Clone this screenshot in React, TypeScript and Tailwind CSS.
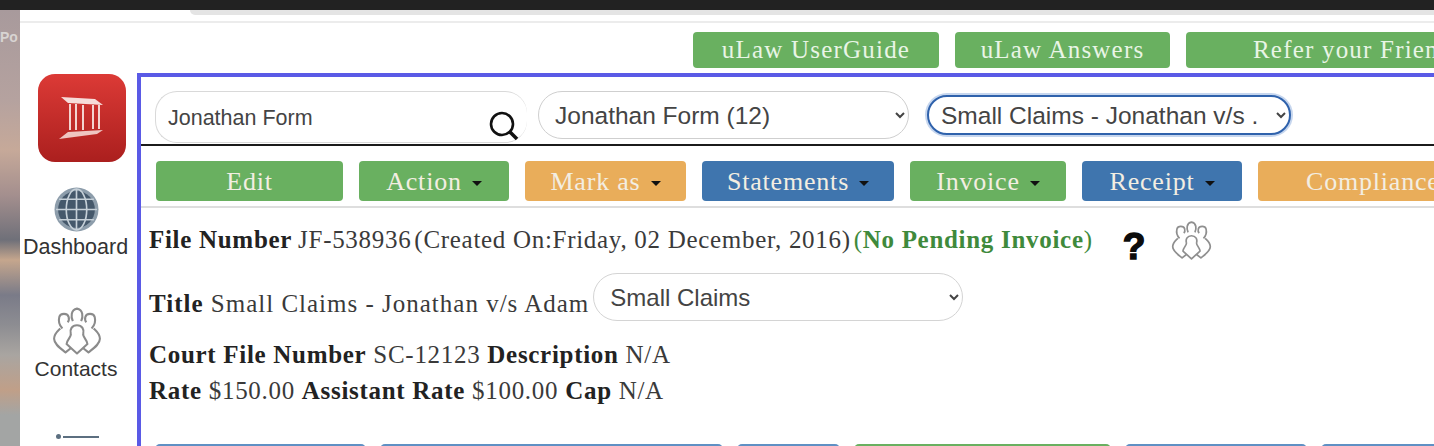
const serif = "font-['Liberation_Serif',serif]";
const sans = "font-['Liberation_Sans',sans-serif]";

const green = "bg-[#69b060]";
const orange = "bg-[#e9ad5a]";
const blue = "bg-[#3f75ae]";

const topLinks = [
  { label: "uLaw UserGuide", className: "w-[246px] justify-center" },
  { label: "uLaw Answers", className: "w-[215px] justify-center" },
  { label: "Refer your Friend", className: "w-[300px] pl-[67px]" },
];

const actions = [
  { label: "Edit", color: green, width: "w-[187px]" },
  { label: "Action", color: green, width: "w-[150px]", caret: true },
  { label: "Mark as", color: orange, width: "w-[161px]", caret: true },
  { label: "Statements", color: blue, width: "w-[192px]", caret: true },
  { label: "Invoice", color: green, width: "w-[156px]", caret: true },
  { label: "Receipt", color: blue, width: "w-[160px]", caret: true },
  { label: "Compliance", color: orange, width: "w-[230px]", indent: true },
];

const lowerButtons = [
  { color: "bg-[#5f90c4]", width: "w-[211px]" },
  { color: "bg-[#5f90c4]", width: "w-[343px]" },
  { color: "bg-[#5f90c4]", width: "w-[103px]" },
  { color: "bg-[#69b060]", width: "w-[257px]" },
  { color: "bg-[#5f90c4]", width: "w-[182px]" },
  { color: "bg-[#5f90c4]", width: "w-[200px]" },
];

const PeopleIcon = ({ className }: { className: string }) => (
  <svg viewBox="0 0 48 46" fill="none" stroke="currentColor" strokeWidth="2" strokeLinejoin="round" className={className}>
    <path d="M10 21 C7 18 6 14 7 10 C8 6 15 6 16 10 C16.5 12 16 14 15 15" />
    <path d="M38 21 C41 18 42 14 41 10 C40 6 33 6 32 10 C31.5 12 32 14 33 15" />
    <path d="M20 14 C18 10 18 3 24 2 C30 3 30 10 28 14" />
    <path d="M8 21 C5 24 2 26 2 31 C2 36 8 40 13 44 L18 40" />
    <path d="M40 21 C43 24 46 26 46 31 C46 36 40 40 35 44 L30 40" />
    <path d="M24 18 C19 18 17 22 18 26 C19 29 14 32 14 36 L24 45 L34 36 C34 32 29 29 30 26 C31 22 29 18 24 18 Z" />
  </svg>
);

const GlobeIcon = () => (
  <svg viewBox="0 0 44 44" className="w-[45px] h-[45px]">
    <circle cx="22" cy="22" r="21.5" fill="#8d9dab" />
    <circle cx="22" cy="22" r="18" fill="#45586b" />
    <g fill="none" stroke="#c6d0d8" strokeWidth="1.6">
      <ellipse cx="22" cy="22" rx="10" ry="20" />
      <path d="M22 2 V42 M2 22 H42 M5 12 H39 M5 32 H39" />
    </g>
  </svg>
);

const CourtLogo = () => (
  <div className="w-[88px] h-[88px] rounded-[17px] bg-gradient-to-b from-[#dc3a36] to-[#ab1f1e] flex items-center justify-center">
    <svg viewBox="0 0 46 44" fill="none" stroke="#f6dcd9" className="w-[46px] h-[44px]">
      <path d="M2 1 L36 3 L44 9 L9 7 Z" fill="#f6dcd9" stroke="none" />
      <path d="M11 8 V34 M17 8 V34 M24 9 V34 M34 9 V33 M40 9 V33" strokeWidth="1.9" />
      <path d="M9 36 L44 34 L38 38 L0 43 Z" fill="#efc5c1" stroke="none" />
    </svg>
  </div>
);

const Caret = () => (
  <span className="ml-[10px] mt-[5px] w-0 h-0 border-x-[5px] border-x-transparent border-t-[5px] border-t-[#111]" />
);

const SearchIcon = () => (
  <svg viewBox="0 0 32 32" fill="none" stroke="#111" className="absolute left-[347px] top-[33px] w-[32px] h-[32px]">
    <circle cx="14" cy="14" r="11" strokeWidth="2.6" />
    <path d="M21.5 21.5 L29 29" strokeWidth="3.6" />
  </svg>
);

export default function App() {
  return (
    <div className="w-[1434px] h-[446px] overflow-hidden bg-white flex flex-col">
      <div className="h-[10px] shrink-0 bg-[#222222]" />
      <div className="flex flex-1 min-h-0">
        <div className="w-[20px] shrink-0 bg-[linear-gradient(180deg,#a89a9c_0px,#b5a29f_90px,#c6a999_140px,#a48f8e_185px,#6f7079_230px,#c5a68d_250px,#7a7b88_285px,#8d8d92_315px,#a9a5a1_345px,#c09f88_380px,#a3a5a4_405px,#a3a5a4_436px)] overflow-hidden">
          <div className={`${sans} mt-[17px] text-[14px] font-bold text-[#d8d4d2] whitespace-nowrap`}>Po</div>
        </div>
        <div className="flex-1 min-w-0 flex flex-col relative">
          <div className="absolute left-[170px] right-0 top-0 h-[5px] bg-[#e4e4e4] rounded-bl-[14px]" />
          <div className="mt-[11px] h-[2px] bg-[#ececec] shrink-0" />
          <div className={`${serif} flex gap-[16px] pl-[673px] mt-[9px] h-[36px] shrink-0`}>
            {topLinks.map((link) => (
              <div
                key={link.label}
                className={`${link.className} ${green} shrink-0 rounded-[4px] text-[#e9f5e6] text-[25px] tracking-[1.2px] flex items-center whitespace-nowrap overflow-hidden`}
              >
                {link.label}
              </div>
            ))}
          </div>
          <div className="flex flex-1 min-h-0 mt-[5px]">
            <aside className={`${sans} w-[117px] shrink-0 flex flex-col items-center text-[#333]`}>
              <div className="mt-[1px] ml-[6px]"><CourtLogo /></div>
              <div className="mt-[25px] -ml-[4px] flex flex-col items-center">
                <GlobeIcon />
                <span className="mt-[3px] leading-[24px] text-[21.5px] -ml-[2px]">Dashboard</span>
              </div>
              <div className="mt-[47px] -ml-[3px] flex flex-col items-center">
                <span className="text-[#8b8b8b]"><PeopleIcon className="w-[50px] h-[49px]" /></span>
                <span className="mt-[2px] leading-[24px] text-[21px] -ml-[2px]">Contacts</span>
              </div>
              <div className="mt-[53px] -ml-[3px] flex items-center gap-[2px]">
                <span className="w-[5px] h-[5px] rounded-full bg-[#5c6f80]" />
                <span className="w-[36px] h-[2px] bg-[#5c6f80]" />
              </div>
            </aside>
            <main className="flex-1 min-w-0 border-l-[4px] border-t-[4px] border-[#5a5ae6]">
              <div className={`${sans} relative h-[69px] border-b-[2px] border-[#1b1b1b] flex items-start text-[#444]`}>
                <input
                  readOnly
                  value="Jonathan Form"
                  className="ml-[14px] mt-[14px] w-[372px] h-[52px] shrink-0 pl-[12px] pt-[3px] rounded-[22px] border-t-[1px] border-l-[1px] border-[#d9d9d9] border-b-[1px] text-[21.5px] text-[#444] outline-none"
                />
                <select className="ml-[11px] mt-[14px] w-[371px] h-[48px] shrink-0 pl-[12px] pr-[8px] rounded-[24px] border border-[#cfcfcf] text-[24.5px] bg-white text-[#444]">
                  <option>Jonathan Form (12)</option>
                </select>
                <select className="ml-[18px] mt-[18px] w-[364px] h-[40px] shrink-0 pl-[8px] pr-[4px] rounded-[20px] border-[2.5px] border-[#2f62ac] shadow-[0_0_0_2px_#c6d6ee] text-[24.5px] bg-white text-[#444]">
                  <option>Small Claims - Jonathan v/s .</option>
                </select>
                <SearchIcon />
              </div>
              <div className={`${serif} flex gap-[16px] pl-[15px] pt-[15px] h-[62px] border-b-[2px] border-[#dedede] text-[26px] tracking-[0.8px] text-[#f3eee2]`}>
                {actions.map((action) => (
                  <div
                    key={action.label}
                    className={`${action.color} ${action.width} shrink-0 h-[40px] rounded-[4px] flex items-center ${action.indent ? "pl-[48px]" : "justify-center"} whitespace-nowrap overflow-hidden`}
                  >
                    {action.label}
                    {action.caret && <Caret />}
                  </div>
                ))}
              </div>
              <div className={`${serif} pl-[8px] text-[25px] tracking-[0.7px] text-[#3a3a3a]`}>
                <div className="flex items-center h-[30px] mt-[17px] whitespace-nowrap">
                  <b className="mr-[6px] text-[#222]">File Number</b>
                  <span className="mr-[3px]">JF-538936</span>
                  <span>(Created On:Friday, 02 December, 2016)</span>
                  <span className="text-[#3f8a3c] ml-[3px]">
                    (<b>No Pending Invoice</b>)
                  </span>
                  <span className={`${sans} ml-[30px] mt-[12px] text-[37px] font-black text-[#0c0c0c] leading-none [-webkit-text-stroke:1.5px_#0c0c0c]`}>?</span>
                  <span className="ml-[25px] text-[#8f8f8f]"><PeopleIcon className="w-[41px] h-[40px]" /></span>
                </div>
                <div className="flex items-center h-[48px] mt-[18px] whitespace-nowrap">
                  <span className="mt-[13px] mr-[4px] tracking-[1px]">
                    <b className="text-[#222]">Title</b> Small Claims - Jonathan v/s Adam
                  </span>
                  <select className={`${sans} w-[370px] h-[48px] shrink-0 pl-[12px] pr-[8px] rounded-[24px] border border-[#d4d4d4] text-[24px] tracking-normal bg-white text-[#444]`}>
                    <option>Small Claims</option>
                  </select>
                </div>
                <div className="h-[36px] mt-[16px] leading-[36px] whitespace-nowrap">
                  <b className="text-[#222]">Court File Number</b> SC-12123 <b className="text-[#222]">Description</b> N/A
                </div>
                <div className="h-[36px] leading-[36px] whitespace-nowrap">
                  <b className="text-[#222]">Rate</b> $150.00 <b className="text-[#222]">Assistant Rate</b> $100.00 <b className="text-[#222]">Cap</b> N/A
                </div>
              </div>
              <div className="flex gap-[14px] mt-[35px] pl-[14px]">
                {lowerButtons.map((button, index) => (
                  <div key={index} className={`${button.color} ${button.width} shrink-0 h-[30px] rounded-[5px]`} />
                ))}
              </div>
            </main>
          </div>
        </div>
      </div>
    </div>
  );
}
